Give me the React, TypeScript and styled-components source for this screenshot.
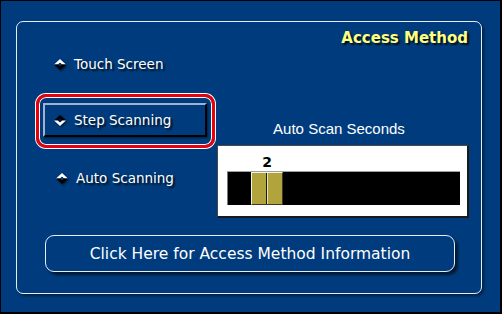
import * as React from 'react';
import styled, { createGlobalStyle } from 'styled-components';

const blue = '#003c7d';
const sans = '"DejaVu Sans", Verdana, sans-serif';

const GlobalStyle = createGlobalStyle`
  html, body {
    margin: 0;
    padding: 0;
    background: ${blue};
  }
`;

const Frame = styled.div`
  box-sizing: border-box;
  width: 502px;
  height: 314px;
  background: ${blue};
  border-style: solid;
  border-color: #000;
  border-width: 1px 2px 2px 1px;
  padding: 20px 18px 18px 15px;
  font-family: ${sans};
`;

const Panel = styled.div`
  box-sizing: border-box;
  height: 100%;
  border: 1px solid #e6ecf6;
  border-radius: 7px;
  box-shadow: 2px 2px 3px rgba(0, 0, 0, 0.45);
  display: flex;
  flex-direction: column;
`;

const Title = styled.div`
  padding: 6px 13px 0 0;
  height: 20px;
  line-height: 20px;
  text-align: right;
  font-size: 15px;
  font-weight: bold;
  color: #ffff80;
  text-shadow: 2px 2px 2px rgba(0, 0, 0, 0.8);
`;

const Main = styled.div`
  display: flex;
  height: 170px;
`;

const LeftColumn = styled.div`
  width: 200px;
  box-sizing: border-box;
  padding-left: 19px;
  display: flex;
  flex-direction: column;
  align-items: flex-start;
`;

const Option = styled.div<{ $indent?: number; $top: number }>`
  display: flex;
  align-items: center;
  gap: 8px;
  height: 24px;
  margin-top: ${p => p.$top}px;
  padding-left: ${p => 18 + (p.$indent || 0)}px;
  color: #fff;
  font-size: 13.5px;
  text-shadow: 2px 2px 2px rgba(0, 0, 0, 0.8);
  cursor: pointer;
`;

const Ring = styled.div`
  margin-top: 18px;
  width: 179px;
  height: 54px;
  box-sizing: border-box;
  border: 3px solid #e8000a;
  border-radius: 10px;
  box-shadow: 0 0 0 1px #fff, inset 0 0 0 1px #fff;
  padding: 6px 5px 8px 4px;
`;

const StepButton = styled.div`
  box-sizing: border-box;
  height: 34px;
  display: flex;
  align-items: center;
  gap: 8px;
  padding-left: 9px;
  border-style: solid;
  border-width: 2px;
  border-color: #9fb2d2 #000 #000 #9fb2d2;
  box-shadow: 1px 1px 2px rgba(0, 0, 0, 0.5);
  color: #fff;
  font-size: 13.5px;
  text-shadow: 2px 2px 2px rgba(0, 0, 0, 0.8);
`;

const RightColumn = styled.div`
  width: 252px;
  display: flex;
  flex-direction: column;
  align-items: center;
`;

const SliderLabel = styled.div`
  margin-top: 72px;
  margin-right: 8px;
  height: 18px;
  line-height: 18px;
  font-family: "Liberation Sans", Arial, sans-serif;
  font-size: 15px;
  color: #fff;
`;

const SliderBox = styled.div`
  margin-top: 7px;
  box-sizing: border-box;
  width: 252px;
  height: 73px;
  background: #fff;
  border-style: solid;
  border-width: 1px 2px 2px 1px;
  border-color: #4a4a4a #1a1a1a #1a1a1a #4a4a4a;
  padding: 25px 0 0 9px;
`;

const Track = styled.div`
  position: relative;
  box-sizing: border-box;
  width: 233px;
  height: 34px;
  background: #000;
  border-top: 1px solid #a0a0a0;
  border-left: 1px solid #7a7a7a;
`;

const Thumb = styled.div`
  position: absolute;
  top: 0;
  bottom: 0;
  width: 32px;
  box-sizing: border-box;
  background: #b2a43c;
  border-style: solid;
  border-width: 1px;
  border-color: #f2f2e6 #3a3a2a #3a3a2a #f2f2e6;

  &::after {
    content: '';
    position: absolute;
    top: 0;
    bottom: 0;
    left: 14px;
    width: 1px;
    background: #1a1a10;
    border-right: 1px solid #e8e2b0;
  }
`;

const ThumbValue = styled.div`
  position: absolute;
  bottom: calc(100% + 3px);
  width: 32px;
  text-align: center;
  font-size: 14px;
  line-height: 14px;
  font-weight: bold;
  color: #000;
`;

const InfoButton = styled.button`
  margin: 17px 0 0 28px;
  width: 410px;
  height: 37px;
  box-sizing: border-box;
  background: ${blue};
  border: 1px solid #e8eef8;
  border-radius: 9px;
  box-shadow: 3px 3px 3px rgba(0, 0, 0, 0.6);
  color: #fff;
  font-family: ${sans};
  font-size: 15.5px;
  cursor: pointer;
  padding: 0;
`;

const Diamond: React.FC<{ selected?: boolean }> = ({ selected }) => (
  <svg width="12" height="11" viewBox="0 0 12 11" style={{ filter: 'drop-shadow(1px 1px 1px rgba(0,0,0,0.7))', flex: 'none' }}>
    <polygon points="0,5.5 6,0 12,5.5 8,5.5 6,3.7 4,5.5" fill={selected ? '#000' : '#fff'} />
    <polygon points="0,5.5 6,11 12,5.5 8,5.5 6,7.3 4,5.5" fill={selected ? '#fff' : '#000'} />
    <polygon points="4,5.5 6,3.7 8,5.5 6,7.3" fill={selected ? '#00115e' : blue} />
  </svg>
);

const seconds = 2;
const minSeconds = 1;
const maxSeconds = 9;
const travel = 233 - 1 - 32;

export default function App() {
  const left = Math.round(((seconds - minSeconds) / (maxSeconds - minSeconds)) * travel) - 2;

  return (
    <>
      <GlobalStyle />
      <Frame>
        <Panel>
          <Title>Access Method</Title>
          <Main>
            <LeftColumn>
              <Option $top={4}>
                <Diamond />
                <span>Touch Screen</span>
              </Option>
              <Ring>
                <StepButton>
                  <Diamond selected />
                  <span>Step Scanning</span>
                </StepButton>
              </Ring>
              <Option $top={18} $indent={2}>
                <Diamond />
                <span>Auto Scanning</span>
              </Option>
            </LeftColumn>
            <RightColumn>
              <SliderLabel>Auto Scan Seconds</SliderLabel>
              <SliderBox>
                <Track>
                  <ThumbValue style={{ left }}>{seconds}</ThumbValue>
                  <Thumb style={{ left }} />
                </Track>
              </SliderBox>
            </RightColumn>
          </Main>
          <InfoButton>Click Here for Access Method Information</InfoButton>
        </Panel>
      </Frame>
    </>
  );
}
